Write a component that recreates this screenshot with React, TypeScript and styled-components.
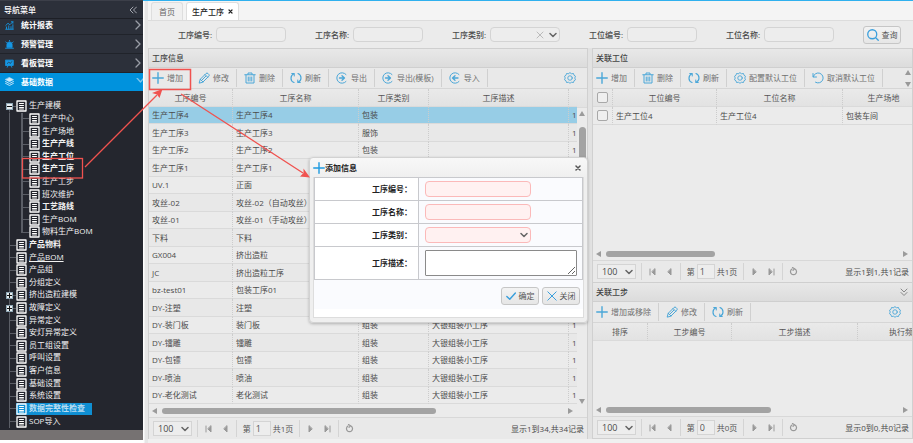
import React from "react";
import styled, { createGlobalStyle, css } from "styled-components";

const Global = createGlobalStyle`
  * { box-sizing: border-box; }
  body {
    margin: 0;
    background: #fff;
    font: 8px/12px "Open Sans", "Noto Sans CJK SC", sans-serif;
    color: #4a4a4a;
  }
  button, input, select, textarea { font: inherit; color: inherit; margin: 0; }
  button { cursor: pointer; }
`;

/* ---------- icons ---------- */

type IconName =
  | "plus" | "pencil" | "trash" | "refresh" | "export" | "import" | "gear" | "undo"
  | "search" | "check" | "cross" | "chart" | "alarm" | "board" | "layers";

const Svg = styled.svg`
  display: block;
  flex: none;
  fill: none;
  stroke: currentColor;
  stroke-linecap: round;
  stroke-linejoin: round;
`;

const shapes: Record<IconName, React.ReactNode> = {
  plus: <path d="M12 1.5v21M1.5 12h21" strokeWidth="2.8" />,
  pencil: <path d="M2.5 21.5l2-7L16 3q2-2 4 0l1.500 1.500q2 2 0 4L10 20zM14 5l5.500 5.500M4.500 14.500L10 20M8 16l7.500-7.500" strokeWidth="2" />,
  trash: <path d="M1.500 5.500h21M8 5V2h8v3M4 6v16h16V6M8.500 10v8M12 10v8M15.500 10v8" strokeWidth="2" />,
  refresh: (
    <>
      <path d="M8 3.500C0 7 0 18 8 21M16 3c8 3.500 8 14 0 17.500" strokeWidth="2.400" />
      <path d="M3.500 3h5v5M20.500 21h-5v-5" strokeWidth="2" />
    </>
  ),
  export: (
    <>
      <path d="M20 5A10.500 10.500 0 1 0 20 19" strokeWidth="2" />
      <path d="M7 12h10M12 7.500l5 4.500-5 4.500" strokeWidth="2.600" />
    </>
  ),
  import: (
    <>
      <path d="M20 5A10.500 10.500 0 1 0 20 19" strokeWidth="2" />
      <path d="M7 12h11M12 7.500L7 12l5 4.500" strokeWidth="2.600" />
    </>
  ),
  gear: (
    <>
      <path d="M12 1.500l3 2 4-.5 1 3.500 3 2-1.500 3.500L23 15.500l-3 2-1 3.500-4-.5-3 2-3-2-4 .5-1-3.500-3-2L2.500 12 1 8.500l3-2L5 3l4 .5z" strokeWidth="1.800" />
      <circle cx="12" cy="12" r="4.500" strokeWidth="1.800" />
    </>
  ),
  undo: <path d="M2 3v7h7M2.500 9.500A10 10 0 1 1 7 20.500" strokeWidth="2" />,
  search: <path d="M17.500 17.500L22.500 22.500M19.500 10.500a9 9 0 1 1-18 0a9 9 0 1 1 18 0z" strokeWidth="2.600" />,
  check: <path d="M2 13l7 7L22.500 5" strokeWidth="3.400" />,
  cross: <path d="M2 2l20 20M22 2L2 22" strokeWidth="2.400" />,
  chart: <path d="M2 22h20M4 21v-5M10 21v-8M16 21v-6M21 21V10M2 12l6-6 5 4 8-8M17 2h4v4" strokeWidth="2.400" />,
  alarm: (
    <>
      <path d="M5 19v-7a7 7 0 0 1 14 0v7z" fill="currentColor" strokeWidth="2" />
      <path d="M1.500 22h21M2 5l2 2M22 5l-2 2M12 1v1.500" strokeWidth="2.400" />
    </>
  ),
  board: (
    <>
      <path d="M2 3h20v14H2zM8 18l-2 4M16 18l2 4" fill="currentColor" strokeWidth="2.400" />
      <path d="M6 12l4-4 4 4 4-5" stroke="#2c303a" strokeWidth="2" />
    </>
  ),
  layers: (
    <>
      <path d="M12 1.500L22.500 7 12 12.500 1.500 7z" fill="currentColor" strokeWidth="1.500" />
      <path d="M1.500 12L12 17.500 22.500 12M1.500 17L12 22.500 22.500 17" strokeWidth="2.400" />
    </>
  ),
};

const Icon = ({ name, size = 12 }: { name: IconName; size?: number }) => (
  <Svg width={size} height={size} viewBox="0 0 24 24" aria-hidden="true">
    {shapes[name]}
  </Svg>
);

const Chevron = ({ d, w, h, s = 1 }: { d: string; w: number; h: number; s?: number }) => (
  <Svg width={w} height={h} viewBox={`0 0 ${w} ${h}`} strokeWidth={s} aria-hidden="true">
    <path d={d} />
  </Svg>
);

const Caret = () => <Chevron d="M1 1.500l3 3 3-3" w={8} h={6} s={1.5} />;

/* ---------- frame ---------- */

const Page = styled.div`
  position: relative;
  display: flex;
  min-height: 100vh;
  overflow: hidden;
`;

const Sidebar = styled.nav`
  flex: 0 0 143px;
  display: flex;
  flex-direction: column;
  margin-bottom: 3px;
  background: #24262e;
  color: #fff;
  border-bottom: 10px solid #767272;
`;

const SideHead = styled.div`
  display: flex;
  align-items: center;
  justify-content: space-between;
  height: 19px;
  padding: 0 6px 0 4px;
  background: #2c303a;
  border-top: 1px solid #3c3f49;
  border-bottom: 1px solid #1d1f26;
  font-weight: 500;
  svg { color: #a4a7b0; }
`;

const MenuLink = styled.a<{ $active?: boolean; $cut?: boolean }>`
  display: flex;
  align-items: center;
  gap: 7px;
  height: ${(p) => (p.$cut ? 16 : p.$active ? 18 : 19)}px;
  padding: 0 ${(p) => (p.$active ? 0 : 2)}px ${(p) => (p.$cut ? 3 : 0)}px 5px;
  background: ${(p) => (p.$active ? "#0092dd" : "#2c303a")};
  border-bottom: 1px solid ${(p) => (p.$active ? "#0092dd" : "#20232a")};
  color: #fff;
  font-weight: 700;
  text-decoration: none;
  > svg:first-child { color: ${(p) => (p.$active ? "#cfeafa" : "#1597e5")}; }
  > svg:last-child { margin-left: auto; color: ${(p) => (p.$active ? "#7cc4ec" : "#9a9da6")}; }
`;

const Tree = styled.ul`
  flex: 1;
  display: flex;
  flex-direction: column;
  margin: 0;
  padding: 9px 0 2px;
  list-style: none;
`;

const TreeItem = styled.li`
  flex: 1 0 12px;
  display: flex;
  align-items: center;
`;

const rail = "#5b5e66";

const Rail = styled.span<{ $kind: "first" | "through" | "branch" }>`
  align-self: stretch;
  flex: 0 0 16px;
  display: flex;
  align-items: center;
  padding-left: 6px;
  background:
    linear-gradient(${rail}, ${rail}) 9px ${(p) => (p.$kind === "first" ? "100% / 1px 50%" : "0 / 1px 100%")} no-repeat
    ${(p) => (p.$kind === "through" ? "" : `, linear-gradient(${rail}, ${rail}) 9px 50% / 7px 1px no-repeat`)};
`;

const ChildRail = styled.span<{ $last?: boolean }>`
  align-self: stretch;
  flex: 0 0 13px;
  background:
    linear-gradient(${rail}, ${rail}) 5px 0 / 2px ${(p) => (p.$last ? "50%" : "100%")} no-repeat,
    linear-gradient(${rail}, ${rail}) 5px 50% / 8px 1px no-repeat;
`;

const Toggle = styled.button`
  width: 7px;
  height: 7px;
  padding: 0;
  border: 1px solid #8fa7b5;
  background: #e8eef2;
  color: #111;
  svg { width: 5px; height: 5px; }
`;

const TreeLink = styled.a<{ $bold?: boolean; $line?: boolean; $hot?: boolean }>`
  display: flex;
  align-items: center;
  gap: 2px;
  height: 12px;
  color: ${(p) => (p.$hot ? "#b9dcf0" : "#f2f2f2")};
  background: ${(p) => (p.$hot ? "#0f8fd3" : "transparent")};
  padding-right: ${(p) => (p.$hot ? 7 : 0)}px;
  font-weight: ${(p) => (p.$bold ? 700 : 400)};
  text-decoration: none;
  white-space: nowrap;
  span { line-height: 10px; margin-bottom: 2px; ${(p) => p.$line && "text-decoration: underline;"} }
`;

const DocIcon = () => (
  <Svg width="11" height="12" viewBox="0 0 11 12" aria-hidden="true">
    <path d="M1 1h9v10H1z" strokeWidth="1.300" stroke="#fff" />
    <path d="M3.500 3.500h4M3.500 5.500h4M3.500 7.500h4M3.500 9h4" strokeWidth="1" stroke="#fff" />
  </Svg>
);

const Main = styled.main`
  flex: 1;
  min-width: 0;
  display: flex;
  flex-direction: column;
  padding: 0 0 4px 5px;
  border-top: 1px solid #2fb0ee;
  background: linear-gradient(90deg, #fdfdfd 1px, #e6e6e6 2px, #e6e6e6 5px, #f0f0f0 5px);
`;

const Tabs = styled.div`
  display: flex;
  align-items: flex-end;
  gap: 3px;
  height: 20px;
  padding-left: 3px;
  background: #f4f4f4;
  border-bottom: 1px solid #dcdcdc;
`;

const Tab = styled.button<{ $active?: boolean }>`
  display: flex;
  align-items: center;
  gap: 4px;
  height: 18px;
  padding: 0 ${(p) => (p.$active ? 5 : 7)}px;
  border: 1px solid #dedede;
  border-bottom: 0;
  border-radius: 3px 3px 0 0;
  background: ${(p) => (p.$active ? "#fff" : "#f0f0f0")};
  color: ${(p) => (p.$active ? "#222" : "#666")};
  font-weight: ${(p) => (p.$active ? 500 : 400)};
`;

const SearchBar = styled.form`
  display: flex;
  align-items: center;
  gap: 27px;
  height: 27px;
  padding: 0 12px 0 28px;
  background: #ebebeb;
`;

const Field = styled.label`
  flex: 0 0 110px;
  display: grid;
  grid-template-columns: 36px 70px;
  gap: 4px;
  align-items: center;
  text-align: right;
  font-weight: 500;
  white-space: nowrap;
`;

const boxed = css`
  width: 100%;
  min-width: 0;
  height: 15px;
  padding: 0 4px;
  border: 1px solid #d4d4d4;
  border-radius: 4px;
  background: #ededed;
  outline: 0;
  appearance: none;
`;

const TextInput = styled.input`${boxed}`;
const SelectInput = styled.select`${boxed}`;

const SelectBox = styled.span`
  position: relative;
  display: block;
  line-height: 0;
`;

const SelectMarks = styled.span`
  position: absolute;
  inset: 0 3px 0 auto;
  display: flex;
  align-items: center;
  gap: 5px;
  pointer-events: none;
  color: #666;
  svg:first-child:not(:last-child) { color: #bbb; }
`;

const PushButton = styled.button`
  display: flex;
  align-items: center;
  justify-content: center;
  gap: 3px;
  width: 38px;
  height: 18px;
  padding: 0;
  border: 1px solid #c6c6c6;
  border-radius: 3px;
  background: linear-gradient(#f3f3f3, #e6e6e6);
  color: #555;
  white-space: nowrap;
  svg { color: #3a9fdc; }
`;

const QueryButton = styled(PushButton)`
  margin-left: auto;
`;

/* ---------- panels ---------- */

const Panels = styled.div`
  flex: 1;
  display: grid;
  grid-template-columns: minmax(0, 440fr) minmax(0, 321fr);
  gap: 4px;
  background: #e2e2e2;
`;

const Stack = styled.div`
  display: flex;
  flex-direction: column;
  min-width: 0;
`;

const Panel = styled.section<{ $grow?: number }>`
  flex: ${(p) => p.$grow ?? 1} 1 0;
  display: flex;
  flex-direction: column;
  min-width: 0;
  background: #ebebeb;
  border: 1px solid #d0d0d0;
  border-width: 0 1px;
  &:last-child { border-bottom-width: 1px; }
`;

const PanelHead = styled.h2`
  display: flex;
  align-items: center;
  justify-content: space-between;
  height: 20px;
  margin: 0;
  padding: 0 4px 0 3px;
  border-top: 1px solid #cfcfcf;
  border-bottom: 1px solid #cfcfcf;
  background: linear-gradient(#e8e8e8, #dcdcdc);
  color: #444;
  font-size: 8px;
  font-weight: 500;
  svg { color: #888; }
`;

const Toolbar = styled.div`
  display: flex;
  align-items: center;
  height: 21px;
  padding-right: 11px;
  background: #e9e9e9;
  border-bottom: 1px solid #d6d6d6;
  white-space: nowrap;
`;

const ToolButton = styled.button`
  display: flex;
  align-items: center;
  gap: 3px;
  height: 18px;
  padding: 0 7px;
  border: 0;
  border-right: 1px solid #d0d0d0;
  background: none;
  color: #707070;
  svg { color: #4ba7d8; }
  &:first-child { padding-left: 3px; }
`;

const GearButton = styled.button`
  margin-left: auto;
  padding: 0;
  border: 0;
  background: none;
  color: #4ba7d8;
`;

const Spinner = styled.div`
  display: flex;
  flex-direction: column;
  gap: 7px;
  margin: 0 -10px 0 auto;
  color: #999;
  svg { fill: currentColor; stroke: none; }
`;

const Body = styled.div`
  flex: 1;
  display: flex;
  min-width: 0;
  overflow: hidden;
`;

const GridTable = styled.table<{ $width?: string }>`
  width: ${(p) => p.$width ?? "100%"};
  flex: none;
  align-self: flex-start;
  table-layout: fixed;
  border-collapse: separate;
  border-spacing: 0;
  th, td {
    padding: 0 0 0 3px;
    border-right: 1px dotted #cccccc;
    border-bottom: 1px solid #dadada;
    overflow: hidden;
    white-space: nowrap;
    text-overflow: clip;
  }
  th {
    height: 18px;
    padding: 0;
    background: linear-gradient(#eaeaea, #e2e2e2);
    font-weight: 400;
    text-align: center;
    color: #555;
  }
  td { height: 18px; }
`;

const CheckTable = styled(GridTable)`
  td:first-child { padding: 0; }
`;

const LeftTable = styled(GridTable)`
  flex: 1 1 0;
  min-width: 0;
  tbody tr:nth-child(odd) td { height: 17px; }
  tbody tr:nth-child(even) { background: #e8e8e8; }
  tbody tr:first-child { background: #97cde6; }
  th:last-child, td:last-child { border-right: 0; }
`;

const VTrack = styled.div`
  flex: 0 0 10px;
  display: flex;
  flex-direction: column;
  align-items: center;
  color: #9b9b9b;
  &::before {
    content: "";
    align-self: stretch;
    height: 18px;
    margin-bottom: 3px;
    background: linear-gradient(#eaeaea, #e2e2e2);
    border-bottom: 1px solid #dadada;
  }
  svg { fill: currentColor; stroke: none; }
  svg:last-child { margin: auto 0 1px; }
`;

const VThumb = styled.div`
  width: 7px;
  height: 120px;
  margin-top: 11px;
  border-radius: 4px;
  background: #a3a3a3;
`;

const HTrack = styled.div`
  display: flex;
  align-items: center;
  gap: 5px;
  height: 12px;
  padding: 0 4px 0 3px;
  color: #9b9b9b;
  svg { fill: currentColor; stroke: none; }
  svg:last-child { margin-left: auto; }
`;

const LeftScroll = styled.div`
  padding-right: 10px;
`;

const HThumb = styled.div<{ $share: number }>`
  width: ${(p) => p.$share}%;
  height: 6px;
  border-radius: 3px;
  background: #a3a3a3;
`;

const Check = styled.input`
  display: block;
  width: 11px;
  height: 11px;
  margin: 0 auto;
  border: 1px solid #a8a8a8;
  border-radius: 2px;
  background: #efefef;
  appearance: none;
`;

const PagerBar = styled.div`
  display: flex;
  align-items: center;
  height: 22px;
  padding: 0 3px 0 4px;
  border-top: 1px solid #d8d8d8;
  background: #e9e9e9;
  white-space: nowrap;
`;

const PageSize = styled.span`
  position: relative;
  width: 39px;
  margin-right: 5px;
  select {
    display: block;
    width: 100%;
    height: 15px;
    padding: 0 4px;
    border: 1px solid #d4d4d4;
    border-radius: 0;
    background: #ededed;
    font-size: 9px;
    line-height: 12px;
    appearance: none;
  }
`;

const PagerGroup = styled.div<{ $w: number }>`
  display: flex;
  align-items: center;
  justify-content: space-evenly;
  width: ${(p) => p.$w}px;
  height: 17px;
  border-left: 1px solid #d4d4d4;
  color: #a0a0a0;
`;

const PagerButton = styled.button`
  padding: 2px;
  border: 0;
  background: none;
  color: #999;
  .solid { fill: currentColor; }
`;

const PageNo = styled.label`
  display: flex;
  align-items: center;
  gap: 2px;
  color: #555;
  input {
    width: 18px;
    height: 15px;
    padding: 0 2px;
    border: 1px solid #d4d4d4;
    background: #ededed;
    font-size: 9px;
  }
`;

const Summary = styled.span`
  margin-left: auto;
`;

/* ---------- dialog ---------- */

const Dialog = styled.div`
  position: absolute;
  left: 309px;
  top: 157px;
  width: 279px;
  padding: 0 3px 4px;
  border: 1px solid #d2d2d2;
  border-radius: 4px;
  background: linear-gradient(#f8f8f8, #efefef 20px);
  box-shadow: 0 1px 3px rgba(0, 0, 0, 0.25);
  color: #222;
`;

const DialogHead = styled.div`
  display: flex;
  align-items: center;
  height: 19px;
  font-weight: 700;
  svg { color: #1f9be0; }
  button { margin-left: auto; padding: 3px; border: 0; background: none; }
  button svg { color: #555; }
`;

const DialogForm = styled.form`
  border: 1px solid #ddd;
  border-top: 0;
  background: #fff;
  padding-bottom: 8px;
`;

const FormTable = styled.table`
  width: 100%;
  table-layout: fixed;
  border-collapse: collapse;
  th, td { height: 23px; padding: 0 5px 0 6px; border: 1px solid #c8c9cd; }
  th { width: 104px; padding-right: 6px; text-align: right; font-weight: 700; }
  td { background: #fafbfe; }
  tr:last-child td, tr:last-child th { height: 33px; }
`;

const pink = css`
  ${boxed}
  height: 16px;
  border-color: #fbb9b9;
  background: #fff1f1;
`;
const Required = styled.input`${pink}`;
const RequiredSelect = styled.select`${pink}`;
const Limit = styled.div`
  width: 106px;
  line-height: 0;
`;

const Area = styled.textarea`
  display: block;
  width: 100%;
  height: 26px;
  border: 1px solid #8a8a8a;
  border-radius: 1px;
  background: #fff;
  resize: both;
`;

const Actions = styled.div`
  display: flex;
  justify-content: flex-end;
  gap: 3px;
  padding: 7px 3px 4px;
  background: #fafbfe;
`;

const Marks = styled.svg`
  position: absolute;
  left: 0;
  top: 0;
  width: 320px;
  height: 200px;
  fill: none;
  stroke: #f0524f;
  pointer-events: none;
`;

/* ---------- data ---------- */

const menu: [IconName, string][] = [
  ["chart", "统计报表"],
  ["alarm", "预警管理"],
  ["board", "看板管理"],
  ["layers", "基础数据"],
];

type Node = { t: string; child?: boolean; toggle?: "+" | "-"; bold?: boolean; line?: boolean; hot?: boolean };
const tree: Node[] = [
  { t: "生产建模", toggle: "-" },
  { t: "生产中心", child: true },
  { t: "生产场地", child: true },
  { t: "生产产线", child: true, bold: true },
  { t: "生产工位", child: true, bold: true },
  { t: "生产工序", child: true, bold: true },
  { t: "生产工步", child: true },
  { t: "班次维护", child: true },
  { t: "工艺路线", child: true, bold: true },
  { t: "生产BOM", child: true },
  { t: "物料生产BOM", child: true },
  { t: "产品物料", bold: true },
  { t: "产品BOM", line: true },
  { t: "产品组" },
  { t: "分组定义" },
  { t: "挤出造粒建模", toggle: "+" },
  { t: "故障定义", toggle: "+" },
  { t: "异常定义" },
  { t: "安灯异常定义" },
  { t: "员工组设置" },
  { t: "呼叫设置" },
  { t: "客户信息" },
  { t: "基础设置" },
  { t: "系统设置" },
  { t: "数据完整性检查", bold: true, hot: true },
  { t: "SOP导入" },
];

const big = "大银组装小工序";
const rows: string[][] = [
  ["生产工序4", "生产工序4", "包装", ""],
  ["生产工序3", "生产工序3", "服饰", ""],
  ["生产工序2", "生产工序2", "包装", ""],
  ["生产工序1", "生产工序1", "包装", ""],
  ["UV.1", "正面", "组装", ""],
  ["攻丝-02", "攻丝-02（自动攻丝）", "组装", ""],
  ["攻丝-01", "攻丝-01（手动攻丝）", "组装", ""],
  ["下料", "下料", "组装", ""],
  ["GX004", "挤出造粒", "组装", ""],
  ["JC", "挤出造粒工序", "组装", ""],
  ["bz-test01", "包装工序01", "包装", ""],
  ["DY-注塑", "注塑", "组装", big],
  ["DY-装门板", "装门板", "组装", big],
  ["DY-镭雕", "镭雕", "组装", big],
  ["DY-包镖", "包镖", "组装", big],
  ["DY-喷油", "喷油", "组装", big],
  ["DY-老化测试", "老化测试", "组装", big],
];

/* ---------- parts ---------- */

const Tools = ({ items }: { items: [IconName, string][] }) => (
  <>
    {items.map(([icon, text]) => (
      <ToolButton key={text} type="button">
        <Icon name={icon} />
        {text}
      </ToolButton>
    ))}
  </>
);

const Gear = () => (
  <GearButton type="button" aria-label="设置">
    <Icon name="gear" />
  </GearButton>
);

const Tri = ({ d, w, h }: { d: string; w: number; h: number }) => (
  <Svg width={w} height={h} viewBox={`0 0 ${w} ${h}`} aria-hidden="true">
    <path d={d} />
  </Svg>
);
const Up = () => <Tri d="M0 5L3 0l3 5z" w={6} h={5} />;
const Down = () => <Tri d="M0 0l3 5 3-5z" w={6} h={5} />;

const HScroll = ({ share }: { share: number }) => (
  <HTrack>
    <Tri d="M5 0v6L0 3z" w={5} h={6} />
    <HThumb $share={share} />
    <Tri d="M0 0v6l5-3z" w={5} h={6} />
  </HTrack>
);

const Nav = ({ label, d }: { label: string; d: string }) => (
  <PagerButton type="button" aria-label={label}>
    <Svg width="7" height="8" viewBox="0 0 7 8" className="solid">
      <path d={d} />
    </Svg>
  </PagerButton>
);

const Pager = ({ page, total, summary }: { page: string; total: string; summary: string }) => (
  <PagerBar>
    <PageSize>
      <select aria-label="每页条数" defaultValue="100">
        <option>100</option>
      </select>
      <SelectMarks>
        <Caret />
      </SelectMarks>
    </PageSize>
    <PagerGroup $w={39}>
      <Nav label="首页" d="M1 1v6M6 1v6L3 4z" />
      <Nav label="上一页" d="M5 1v6L2 4z" />
    </PagerGroup>
    <PagerGroup $w={63}>
      <PageNo>
        第<input defaultValue={page} />
        {total}
      </PageNo>
    </PagerGroup>
    <PagerGroup $w={39}>
      <Nav label="下一页" d="M2 1v6l3-3z" />
      <Nav label="末页" d="M1 1v6l3-3zM6 1v6" />
    </PagerGroup>
    <PagerGroup $w={22}>
      <PagerButton type="button" aria-label="刷新">
        <Chevron d="M3 2a3 3 0 1 0 3 0M3.500 .5L5.500 1.800L4 3.300" w={9} h={9} s={1.2} />
      </PagerButton>
    </PagerGroup>
    <Summary>{summary}</Summary>
  </PagerBar>
);

const TreeRow = ({ node, index }: { node: Node; index: number }) => (
  <TreeItem>
    <Rail $kind={index === 0 ? "first" : node.child ? "through" : "branch"}>
      {node.toggle && (
        <Toggle type="button" aria-label={node.t}>
          <Chevron d={node.toggle === "+" ? "M0 2.500h5M2.500 0v5" : "M0 2.500h5"} w={5} h={5} />
        </Toggle>
      )}
    </Rail>
    {node.child && <ChildRail $last={!tree[index + 1].child} />}
    <TreeLink href="#" $bold={node.bold} $line={node.line} $hot={node.hot}>
      <DocIcon />
      <span>{node.t}</span>
    </TreeLink>
  </TreeItem>
);

export default function App() {
  return (
    <Page>
      <Global />
      <Sidebar>
        <SideHead>
          导航菜单
          <Chevron d="M4 1L1 4l3 3M7.500 1l-3 3 3 3" w={8} h={8} />
        </SideHead>
        {menu.map(([icon, text], i) => (
          <MenuLink key={text} href="#" $cut={i === 0} $active={i === 3}>
            <Icon name={icon} size={9} />
            {text}
            {i === 3 ? (
              <Chevron d="M1 0l3.500 4L7 1" w={7} h={8} s={1.3} />
            ) : (
              <Chevron d="M1 1l4 4-4 4" w={6} h={10} s={1.3} />
            )}
          </MenuLink>
        ))}
        <Tree>
          {tree.map((n, i) => (
            <TreeRow key={n.t} node={n} index={i} />
          ))}
        </Tree>
      </Sidebar>

      <Main>
        <Tabs>
          <Tab type="button">首页</Tab>
          <Tab type="button" $active>
            生产工序
            <Chevron d="M1 1l3 3M4 1L1 4" w={5} h={5} s={1.2} />
          </Tab>
        </Tabs>
        <SearchBar>
          <Field>
            工序编号:
            <TextInput />
          </Field>
          <Field>
            工序名称:
            <TextInput />
          </Field>
          <Field>
            工序类别:
            <SelectBox>
              <SelectInput />
              <SelectMarks>
                <Chevron d="M1 1l6 6M7 1L1 7" w={8} h={8} />
                <Caret />
              </SelectMarks>
            </SelectBox>
          </Field>
          <Field>
            工位编号:
            <TextInput />
          </Field>
          <Field>
            工位名称:
            <TextInput />
          </Field>
          <QueryButton type="button">
            <Icon name="search" />
            查询
          </QueryButton>
        </SearchBar>

        <Panels>
          <Panel>
            <PanelHead>工序信息</PanelHead>
            <Toolbar>
              <Tools
                items={[
                  ["plus", "增加"],
                  ["pencil", "修改"],
                  ["trash", "删除"],
                  ["refresh", "刷新"],
                  ["export", "导出"],
                  ["export", "导出(模板)"],
                  ["import", "导入"],
                ]}
              />
              <Gear />
            </Toolbar>
            <Body>
              <LeftTable>
                <colgroup>
                  <col width="84" />
                  <col width="126" />
                  <col width="70" />
                  <col width="140" />
                  <col />
                </colgroup>
                <thead>
                  <tr>
                    <th>工序编号</th>
                    <th>工序名称</th>
                    <th>工序类别</th>
                    <th>工序描述</th>
                    <th />
                  </tr>
                </thead>
                <tbody>
                  {rows.map((r) => (
                    <tr key={r[0]}>
                      {r.map((c, i) => (
                        <td key={i}>{c}</td>
                      ))}
                      <td>1</td>
                    </tr>
                  ))}
                </tbody>
              </LeftTable>
              <VTrack>
                <Up />
                <VThumb />
                <Down />
              </VTrack>
            </Body>
            <LeftScroll>
              <HScroll share={65} />
            </LeftScroll>
            <Pager page="1" total="共1页" summary="显示1到34,共34记录" />
          </Panel>

          <Stack>
            <Panel $grow={235}>
              <PanelHead>关联工位</PanelHead>
              <Toolbar>
                <Tools
                  items={[
                    ["plus", "增加"],
                    ["trash", "删除"],
                    ["refresh", "刷新"],
                    ["gear", "配置默认工位"],
                    ["undo", "取消默认工位"],
                  ]}
                />
                <Spinner>
                  <Up />
                  <Down />
                </Spinner>
              </Toolbar>
              <Body>
                <CheckTable $width="332px">
                  <colgroup>
                    <col width="20" />
                    <col width="104" />
                    <col width="126" />
                    <col width="82" />
                  </colgroup>
                  <thead>
                    <tr>
                      <th>
                        <Check type="checkbox" aria-label="全选" />
                      </th>
                      <th>工位编号</th>
                      <th>工位名称</th>
                      <th>生产场地</th>
                    </tr>
                  </thead>
                  <tbody>
                    <tr>
                      <td>
                        <Check type="checkbox" aria-label="生产工位4" />
                      </td>
                      <td>生产工位4</td>
                      <td>生产工位4</td>
                      <td>包装车间</td>
                    </tr>
                  </tbody>
                </CheckTable>
              </Body>
              <HScroll share={35} />
              <Pager page="1" total="共1页" summary="显示1到1,共1记录" />
            </Panel>
            <Panel $grow={156}>
              <PanelHead>
                关联工步
                <Chevron d="M1 1l3 3 3-3M1 4.500l3 3 3-3" w={8} h={8} />
              </PanelHead>
              <Toolbar>
                <Tools
                  items={[
                    ["plus", "增加或移除"],
                    ["pencil", "修改"],
                    ["refresh", "刷新"],
                  ]}
                />
                <Gear />
              </Toolbar>
              <Body>
                <GridTable $width="360px">
                  <colgroup>
                    <col width="55" />
                    <col width="84" />
                    <col width="126" />
                    <col width="95" />
                  </colgroup>
                  <thead>
                    <tr>
                      <th>排序</th>
                      <th>工步编号</th>
                      <th>工步描述</th>
                      <th>执行频率</th>
                    </tr>
                  </thead>
                </GridTable>
              </Body>
              <HScroll share={53} />
              <Pager page="0" total="共0页" summary="显示0到0,共0记录" />
            </Panel>
          </Stack>
        </Panels>
      </Main>

      <Dialog role="dialog" aria-labelledby="dialog-title">
        <DialogHead>
          <Icon name="plus" />
          <span id="dialog-title">添加信息</span>
          <button type="button" aria-label="关闭窗口">
            <Chevron d="M1 1l4 4M5 1L1 5" w={6} h={6} s={1.5} />
          </button>
        </DialogHead>
        <DialogForm>
          <FormTable>
            <tbody>
              <tr>
                <th><label htmlFor="code">工序编号：</label></th>
                <td><Limit><Required id="code" /></Limit></td>
              </tr>
              <tr>
                <th><label htmlFor="name">工序名称：</label></th>
                <td><Limit><Required id="name" /></Limit></td>
              </tr>
              <tr>
                <th><label htmlFor="kind">工序类别：</label></th>
                <td>
                  <Limit>
                    <SelectBox>
                      <RequiredSelect id="kind" />
                      <SelectMarks>
                        <Caret />
                      </SelectMarks>
                    </SelectBox>
                  </Limit>
                </td>
              </tr>
              <tr>
                <th><label htmlFor="desc">工序描述：</label></th>
                <td><Area id="desc" /></td>
              </tr>
            </tbody>
          </FormTable>
          <Actions>
            <PushButton type="button">
              <Icon name="check" size={10} />
              确定
            </PushButton>
            <PushButton type="button">
              <Icon name="cross" size={10} />
              关闭
            </PushButton>
          </Actions>
        </DialogForm>
      </Dialog>

      <Marks viewBox="0 0 320 200" aria-hidden="true">
        <rect x="149.5" y="69.500" width="41" height="20" strokeWidth="1.500" />
        <rect x="22.500" y="158.500" width="60" height="19.500" strokeWidth="1.300" />
        <path d="M85 167L157 95M181 94L303 173" strokeWidth="1.300" />
        <path d="M162.500 89l-3 9-2.500-3.500-5-1.500zM310 177.500l-10-1 3.500-3.500 0-4.500z" fill="#f0524f" stroke="none" />
      </Marks>
    </Page>
  );
}
